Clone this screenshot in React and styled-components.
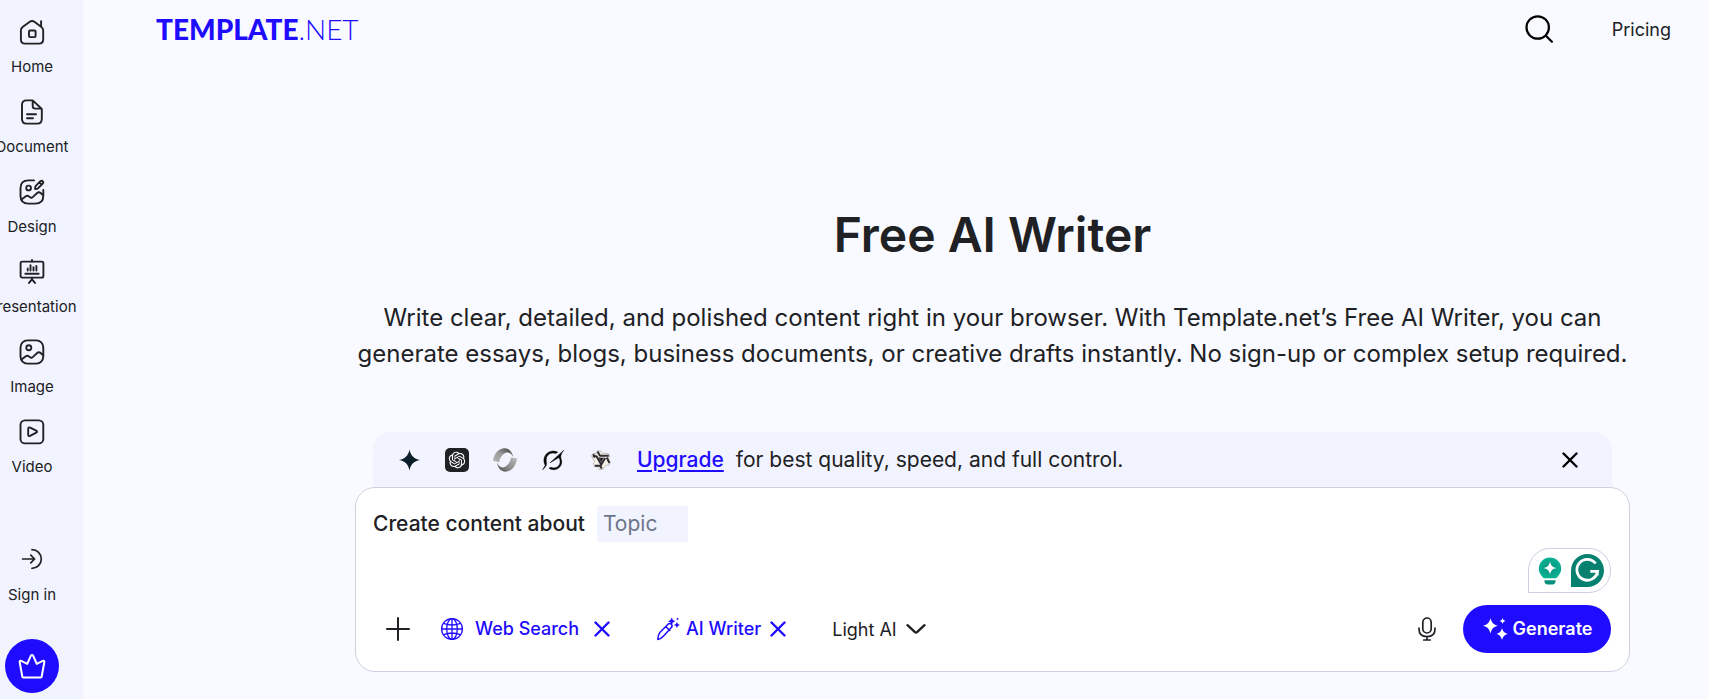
import React from "react";
import styled, { createGlobalStyle } from "styled-components";
import { RiOpenaiFill } from "react-icons/ri";

const blue = "#1f0cff";
const ink = "#202124";
const tint = "#f1f4fe";

const GlobalStyle = createGlobalStyle`
  * { box-sizing: border-box; }
  body {
    margin: 0;
    background: #f9faff;
    color: ${ink};
    font-family: Inter, "Liberation Sans", sans-serif;
  }
  button, input, select { font: inherit; color: inherit; }
  a { color: inherit; text-decoration: none; }
`;

const Page = styled.div`
  display: flex;
  min-height: 100vh;
`;

const Sidebar = styled.nav`
  flex: none;
  display: flex;
  flex-direction: column;
  width: 83px;
  padding: 19px 19px 0 0;
  overflow: hidden;
  background: ${tint};
`;

const NavList = styled.ul`
  display: flex;
  flex-direction: column;
  gap: 20px;
  margin: 0;
  padding: 0;
  list-style: none;
`;

const NavLink = styled.a`
  display: flex;
  flex-direction: column;
  align-items: center;
  gap: ${(p) => (p.$tight ? 12 : 14)}px;
  height: 60px;
  font-size: 15px;
  line-height: 20px;
  white-space: nowrap;
`;

const Account = styled.div`
  display: flex;
  flex-direction: column;
  align-items: center;
  gap: 32px;
  margin-top: 68px;
`;

const CrownButton = styled.button`
  display: grid;
  place-items: center;
  width: 54px;
  height: 54px;
  padding: 0;
  border: 0;
  border-radius: 50%;
  background: ${blue};
`;

const Content = styled.div`
  flex: 1;
  min-width: 0;
`;

const Header = styled.header`
  display: flex;
  align-items: center;
  justify-content: space-between;
  height: 58px;
  padding: 0 38px 0 73px;
`;

const Logo = styled.a`
  color: ${blue};
  font-family: Lato, "Open Sans", sans-serif;
  font-size: 28px;
  font-weight: 300;
  line-height: 32px;
  b { font-weight: 900; }
`;

const HeaderActions = styled.div`
  display: flex;
  align-items: center;
  gap: 59px;
  font-size: 18px;
`;

const IconButton = styled.button`
  display: grid;
  place-items: center;
  padding: 0;
  border: 0;
  background: none;
  color: ${(p) => p.$color || ink};
`;

const Main = styled.main`
  padding: 148px 79px 28px 272px;
`;

const Title = styled.h1`
  margin: 0;
  font-size: 48px;
  font-weight: 600;
  line-height: 58px;
  text-align: center;
`;

const Intro = styled.p`
  margin: 36px 0 60px;
  font-size: 24px;
  line-height: 36px;
  text-align: center;
`;

const Banner = styled.div`
  display: flex;
  align-items: center;
  gap: 24px;
  height: 55px;
  margin: 0 18px;
  padding: 0 34px 0 24px;
  border-radius: 18px 18px 0 0;
  background: ${tint};
  font-size: 21px;
  line-height: 28px;
`;

const BannerText = styled.p`
  flex: 1;
  margin: 0;
  a {
    margin-right: 12px;
    color: ${blue};
    font-weight: 500;
    text-decoration: underline;
    text-decoration-thickness: 2px;
    text-underline-offset: 3px;
  }
`;

const GptTile = styled.span`
  display: grid;
  place-items: center;
  width: 24px;
  height: 24px;
  border-radius: 5px;
  background: ${ink};
  color: #fff;
`;

const Composer = styled.form`
  display: flex;
  flex-direction: column;
  padding: 18px 18px 18px 17px;
  border: 1px solid #cdd1df;
  border-radius: 20px;
  background: #fff;
`;

const PromptRow = styled.div`
  display: flex;
  align-items: center;
  gap: 12px;
  font-size: 21px;
  line-height: 24px;
  font-weight: 500;
`;

const TopicInput = styled.input`
  width: 91px;
  height: 36px;
  padding: 0 6px 2px;
  border: 0;
  border-radius: 3px;
  background: ${tint};
  font-weight: 400;
  &::placeholder { color: #6d748a; opacity: 1; }
`;

const Assistant = styled.div`
  display: flex;
  align-items: center;
  align-self: flex-end;
  gap: 8px;
  width: 83px;
  height: 45px;
  margin: 6px 0 12px;
  padding-left: 8px;
  border: 1px solid #cdcfe0;
  border-radius: 22px 22px 22px 0;
`;

const Toolbar = styled.div`
  display: flex;
  align-items: center;
  padding-left: 13px;
  font-size: 18px;
  line-height: 24px;
`;

const Chip = styled.div`
  display: flex;
  align-items: center;
  gap: ${(p) => p.$gap}px;
  margin-left: ${(p) => p.$offset}px;
  color: ${blue};
  font-weight: 500;
`;

const RemoveButton = styled(IconButton)`
  padding-left: ${(p) => p.$space || 0}px;
`;

const ModelPicker = styled.div`
  display: grid;
  align-items: center;
  margin-left: 46px;
  select, svg { grid-area: 1 / 1; }
  svg { justify-self: end; pointer-events: none; }
`;

const ModelSelect = styled.select`
  appearance: none;
  padding: 1px 29px 0 0;
  border: 0;
  background: none;
`;

const ToolbarEnd = styled.div`
  display: flex;
  align-items: center;
  gap: 24px;
  margin-left: auto;
`;

const GenerateButton = styled.button`
  display: flex;
  align-items: center;
  justify-content: center;
  gap: 5px;
  width: 148px;
  height: 48px;
  padding: 0;
  border: 0;
  border-radius: 24px;
  background: ${blue};
  color: #fff;
  font-weight: 600;
`;

const Line = ({ size = 24, box = 24, w = 1.6, children, ...rest }) => (
  <svg width={size} height={size} viewBox={`0 0 ${box} ${box}`} fill="none" stroke="currentColor"
    strokeWidth={w} strokeLinecap="round" strokeLinejoin="round" aria-hidden="true" {...rest}>
    {children}
  </svg>
);

const HomeIcon = () => (
  <Line size={26} box={26} w={1.9}>
    <path d="M1.9 11.5c0-1.6.5-2.600 1.700-3.400L10.800 2.800c1.500-1.100 3.100-1.100 4.600 0l7 5.100c1.200.9 1.800 2 1.800 3.600v8.800c0 3-1.400 4.300-4.300 4.300H6.200c-2.900 0-4.300-1.300-4.300-4.300zM22.100 2.100v5.200" />
    <rect x="10" y="11.500" width="6.600" height="6.600" rx="1" />
  </Line>
);
const DocumentIcon = () => (
  <Line size={26} box={26} w={1.9}>
    <path d="M7.500 1.400h6.200L22.800 10v10c0 3-1.500 4.600-4.500 4.600H7.500c-3 0-4.500-1.600-4.500-4.600V6c0-3 1.500-4.600 4.500-4.600zM13.700 1.400V7c0 1.700 1 2.600 2.700 2.600h6.200M8 15.300h9M8 19.300h6" />
  </Line>
);
const scene = "M2.500 20.500l4.300-3.200c1-.8 2-.8 3 0l1.200.9c.9.700 1.900.6 2.700-.1l4.500-4.100c1.100-1 2.300-1 3.400 0l2.300 2";
const DesignIcon = () => (
  <Line size={26} box={26} w={1.9}>
    <path d="M15 1.400H9.500C4.200 1.400 1.500 4 1.500 9.200v7.600c0 5.200 2.700 7.800 8 7.800h6.800c5.300 0 8-2.600 8-7.800V11" />
    <circle cx="9.600" cy="9" r="2.400" />
    <path d={scene} />
    <path d="M16.800 6.800l4.600-4.600c1.600-1.300 3.700.7 2.400 2.300l-4.600 4.700c-.9.700-1.900.9-3.100.9 0-1.300.1-2.400.7-3.300zM20.400 3.400l2.200 2.200" />
  </Line>
);
const PresentationIcon = () => (
  <Line size={26} box={26} w={1.900}>
    <rect x="1.600" y="2.600" width="22.800" height="16" rx="1.600" />
    <path d="M13 1v1.600M13 18.800v1.500m0 0-3 3.600m3-3.600 3 3.600M6.300 14.800h13.400M8.700 9.500v2M11.500 6.300v5.200M14.500 8.300v3.200M17.400 7v4.500" />
  </Line>
);
const ImageIcon = () => (
  <Line size={26} box={26} w={1.900}>
    <rect x="1.500" y="1.400" width="22.800" height="23.200" rx="7" />
    <circle cx="9.800" cy="8.800" r="2.500" />
    <path d={scene} />
  </Line>
);
const VideoIcon = () => (
  <Line size={26} box={26} w={1.900}>
    <rect x="1.500" y="1.400" width="22.800" height="23" rx="4.500" />
    <path d="M9.200 9.800c0-1.300.8-1.700 1.900-1.200l6.100 3c1.100.6 1.100 1.500 0 2.100l-6.100 3.200c-1.100.5-1.900.1-1.900-1.200z" />
  </Line>
);
const SignInIcon = () => (
  <Line w={1.700}>
    <path d="M2.600 12h12M10.800 8.200 14.600 12l-3.800 3.800M12 2.700a9.300 9.300 0 0 1 0 18.600" />
  </Line>
);
const CrownIcon = () => (
  <Line size={30} box={30} w={2} stroke="#fff">
    <path d="M5.300 25.500 2.700 11.200c-.3-1.300.5-1.900 1.600-1.300l5.900 3 3.600-8c.6-1.200 1.800-1.200 2.400 0l3.600 8 5.900-3c1.100-.6 1.900 0 1.600 1.300l-2.600 14.300c0 .7-.5 1-1.100 1H6.400c-.6 0-1.100-.3-1.100-1z" />
  </Line>
);
const SearchIcon = () => (
  <Line size={28} box={28} w={2.200}>
    <circle cx="12.700" cy="12.500" r="11.200" />
    <path d="m20.900 20.700 6 6" />
  </Line>
);
const CrossIcon = () => (
  <Line size={16} box={16} w={2.400}>
    <path d="m1.500 1.500 13 13M14.500 1.500 1.500 14.500" />
  </Line>
);
const PlusIcon = () => <Line w={2}><path d="M12 1v22M1 12h22" /></Line>;
const GlobeIcon = () => (
  <Line size={24} w={1.300}>
    <circle cx="12" cy="12" r="10.400" />
    <ellipse cx="12" cy="12" rx="5.300" ry="10.400" />
    <path d="M12 1.600v20.800M1.600 12h20.800M3.600 6.300c5.400 2.200 11.400 2.200 16.800 0M3.600 17.700c5.400-2.200 11.400-2.200 16.800 0" />
  </Line>
);
const PenIcon = () => (
  <Line size={24} w={1.500}>
    <path d="M1.800 22.400c.2-2.600.5-5 2.100-6.900L12 7.200c1.200-1 2.300-.9 3.300.1s1.100 2.100.1 3.300l-8.100 8.600c-1.600 1.900-3.100 2.900-5.500 3.200zM9.800 9.600l4 3.900" />
    <path fill="currentColor" stroke="none" d="m15.700.6 1.200 2.400 2.400 1.200-2.400 1.200-1.200 2.400-1.200-2.400-2.400-1.200 2.400-1.200zM20.900 5l1 2 2 1-2 1-1 2-1-2-2-1 2-1zM21.500.4l.5 1 1 .5-1 .5-.5 1-.5-1-1-.5 1-.5z" />
  </Line>
);
const ChevronIcon = () => (
  <Line size={20} box={20} w={2.400}><path d="m1.500 6.200 7.200 6.700c.9.800 1.700.8 2.600 0l7.200-6.700" /></Line>
);
const MicIcon = () => (
  <Line size={24} w={1.700}>
    <rect x="7.800" y="1" width="8.400" height="15" rx="4.200" />
    <path d="M4 11v1c0 4.700 3 7.600 8 7.600s8-2.900 8-7.600v-1M12 19.800v3.200M8.800 23h6.400" />
  </Line>
);
const SparklesIcon = () => (
  <svg width="26" height="24" viewBox="0 0 26 24" fill="#fff" aria-hidden="true">
    <path d="M8.500 1.200c1.200 4.400 2.900 6.300 7.300 7.600-4.400 1.200-6.100 3.200-7.300 7.700C7.300 12 5.500 10 1 8.800c4.500-1.300 6.300-3.200 7.500-7.600zM20 11.300c.9 3.200 2.400 4.600 5.600 5.600-3.200.9-4.700 2.400-5.600 5.900-.9-3.500-2.300-5-5.400-5.900 3.100-1 4.500-2.400 5.400-5.600zM20.600.9c.5 1.800 1.200 2.400 2.900 3-1.700.6-2.400 1.200-2.900 3-.5-1.800-1.200-2.400-2.900-3 1.700-.6 2.400-1.200 2.900-3z" />
  </svg>
);
const GeminiIcon = () => (
  <svg width="24" height="24" viewBox="0 0 24 24" aria-hidden="true">
    <defs><linearGradient id="gem" x1="0" y1="0" x2="1" y2="1"><stop stopColor="#2b2b2b" /><stop offset=".5" stopColor="#071f2a" /><stop offset="1" stopColor="#111" /></linearGradient></defs>
    <path fill="url(#gem)" d="M12.500 1.500c1.300 6.200 4.300 9.200 10.500 10.500-6.200 1.300-9.200 4.200-10.500 10.400C11.200 16.200 8.200 13.300 2 12c6.200-1.300 9.200-4.300 10.500-10.500z" />
  </svg>
);
const RingIcon = () => (
  <svg width="24" height="24" viewBox="0 0 24 24" aria-hidden="true">
    <defs>
      <linearGradient id="ringTop" x1="0" y1="1" x2="1" y2="0"><stop stopColor="#b8b8b8" /><stop offset=".5" stopColor="#999" /><stop offset="1" stopColor="#333" /></linearGradient>
      <linearGradient id="ringLow" x1="0" y1="1" x2="1" y2="0"><stop stopColor="#444" /><stop offset=".4" stopColor="#888" /><stop offset="1" stopColor="#bbb" /></linearGradient>
    </defs>
    <path fill="url(#ringTop)" d="M0 12.800C.7 6.500 4.300 1.300 10 .4c4.700-.8 8.800 1.700 10.300 8.800-2.700-5.400-6.600-5.800-9.800-3.100-2.500 2.100-4 5-4.200 8.200z" />
    <path fill="url(#ringLow)" d="M24 10.200c-.7 6.900-4.400 12.200-10.200 13.300C9.200 24.300 5.200 21.500 4 14.800c2.600 5.100 6.200 5.700 9.400 3 2.600-2.100 4.200-4.900 4.400-8z" />
  </svg>
);
const GrokIcon = () => (
  <svg width="24" height="24" viewBox="0 0 24 24" fill="#050505" stroke="#050505" strokeWidth=".5" aria-hidden="true">
    <path d="M9.100 14.800 22.800 2.200c-3.500 4.600-3.400 6.500-2.300 9.900 1.300 5.400-3 9.800-8.100 9.600-1.900-.1-3.200-.7-4.500-1.500l2-1c4.300 2.200 9.300-.7 9.200-5.700 0-1.400-.5-2.800-1.200-4zM16.700 4.200l-2 1.200C10 3.600 5.200 6.800 5.200 11.800c0 3.300 1 4.300-.5 6.500-.8 1.200-1.900 2.300-3.100 3.500l2.600-4.500C1.600 12.600 3.100 5.800 8.800 3.700c2.900-1.100 5.700-.6 7.900.5z" />
  </svg>
);
const QwenIcon = () => (
  <svg width="24" height="24" viewBox="0 0 24 24" strokeLinejoin="round" aria-hidden="true">
    <path fill="#f5f2e8" stroke="#8d8a8a" strokeWidth=".5" d="m8.500 2.800 3.300.1 1.500 2.500h6l1.600 2.800-1.500 2.700 2 3.600-1.500 2.700h-3l-3.400 4.300h-3l-1.600-2.800H5.700L4 16.200l1.500-2.800-3-5.300L4 5.500h3.300z" />
    <path fill="none" stroke="#302b33" strokeWidth="2" d="M8.500 3.500 11 7.800h8.800M3.800 8.300h3.700l4.700 8.300M5.800 17.800h5.800l4.600-7.900M17.800 9.500l2.600 5.500M12.800 20.500l-1.500-2.600M4.200 6.300l2 3.200" />
    <path fill="#302b33" d="m9.300 9.600 5.600.1-2.700 4.800z" />
  </svg>
);
const BulbIcon = () => (
  <svg width="26" height="32" viewBox="0 0 26 32" aria-hidden="true">
    <defs><radialGradient id="bulb"><stop stopColor="#078f7d" /><stop offset="1" stopColor="#0bb293" /></radialGradient></defs>
    <path fill="url(#bulb)" d="M13 2.500A11.200 11.200 0 0 0 1.800 13.700c0 4.600 3 7.100 4.900 9.500h12.600c1.900-2.400 4.900-4.900 4.900-9.500A11.200 11.200 0 0 0 13 2.500z" />
    <path fill="#fff" d="M13 6.500c1 4.200 2.400 5.600 6.500 6.600-4.100 1-5.500 2.400-6.500 6.500-1-4.100-2.400-5.500-6.500-6.500 4.100-1 5.500-2.400 6.500-6.600z" />
    <path fill="#078f7d" d="M7.500 25.200h11v1c0 2-1 3.200-3 3.200h-5c-2 0-3-1.200-3-3.200z" />
  </svg>
);
const GrammarIcon = () => (
  <svg width="33" height="33" viewBox="0 0 33 33" aria-hidden="true">
    <path fill="#078070" d="M16.500 0a16.500 16.500 0 1 1 0 33H0V16.500A16.500 16.500 0 0 1 16.500 0z" />
    <path fill="none" stroke="#fff" strokeWidth="2.800" d="M24.600 9.500a10.400 10.400 0 1 0 2 7.800h-7.300M26.300 17.300v4.200" />
  </svg>
);

const navItems = [
  ["Home", HomeIcon],
  ["Document", DocumentIcon],
  ["Design", DesignIcon],
  ["Presentation", PresentationIcon],
  ["Image", ImageIcon],
  ["Video", VideoIcon],
];

export default function App() {
  return (
    <>
      <GlobalStyle />
      <Page>
        <Sidebar aria-label="Main">
          <NavList>
            {navItems.map(([label, Icon]) => (
              <li key={label}>
                <NavLink href="#" $tight><Icon />{label}</NavLink>
              </li>
            ))}
          </NavList>
          <Account>
            <NavLink href="#"><SignInIcon />Sign in</NavLink>
            <CrownButton type="button" aria-label="Upgrade plan"><CrownIcon /></CrownButton>
          </Account>
        </Sidebar>
        <Content>
          <Header>
            <Logo href="#"><b>TEMPLATE</b>.NET</Logo>
            <HeaderActions>
              <IconButton type="button" aria-label="Search" $color="#000"><SearchIcon /></IconButton>
              <a href="#">Pricing</a>
            </HeaderActions>
          </Header>
          <Main>
            <Title>Free AI Writer</Title>
            <Intro>
              Write clear, detailed, and polished content right in your browser. With Template.net’s Free AI Writer, you can
              generate essays, blogs, business documents, or creative drafts instantly. No sign-up or complex setup required.
            </Intro>
            <Banner>
              <GeminiIcon />
              <GptTile><RiOpenaiFill size={20} /></GptTile>
              <RingIcon />
              <GrokIcon />
              <QwenIcon />
              <BannerText><a href="#">Upgrade</a>for best quality, speed, and full control.</BannerText>
              <IconButton type="button" aria-label="Close" $color="#000"><CrossIcon /></IconButton>
            </Banner>
            <Composer onSubmit={(e) => e.preventDefault()}>
              <PromptRow>
                <label htmlFor="topic">Create content about</label>
                <TopicInput id="topic" placeholder="Topic" />
              </PromptRow>
              <Assistant><BulbIcon /><GrammarIcon /></Assistant>
              <Toolbar>
                <IconButton type="button" aria-label="Add"><PlusIcon /></IconButton>
                <Chip $gap={11} $offset={30}>
                  <GlobeIcon />
                  Web Search
                  <RemoveButton type="button" aria-label="Remove Web Search" $color={blue} $space={4}><CrossIcon /></RemoveButton>
                </Chip>
                <Chip $gap={6} $offset={46}>
                  <PenIcon />
                  AI Writer
                  <RemoveButton type="button" aria-label="Remove AI Writer" $color={blue} $space={3}><CrossIcon /></RemoveButton>
                </Chip>
                <ModelPicker>
                  <ModelSelect aria-label="Model"><option>Light AI</option></ModelSelect>
                  <ChevronIcon />
                </ModelPicker>
                <ToolbarEnd>
                  <IconButton type="button" aria-label="Dictate"><MicIcon /></IconButton>
                  <GenerateButton type="submit"><SparklesIcon />Generate</GenerateButton>
                </ToolbarEnd>
              </Toolbar>
            </Composer>
          </Main>
        </Content>
      </Page>
    </>
  );
}
